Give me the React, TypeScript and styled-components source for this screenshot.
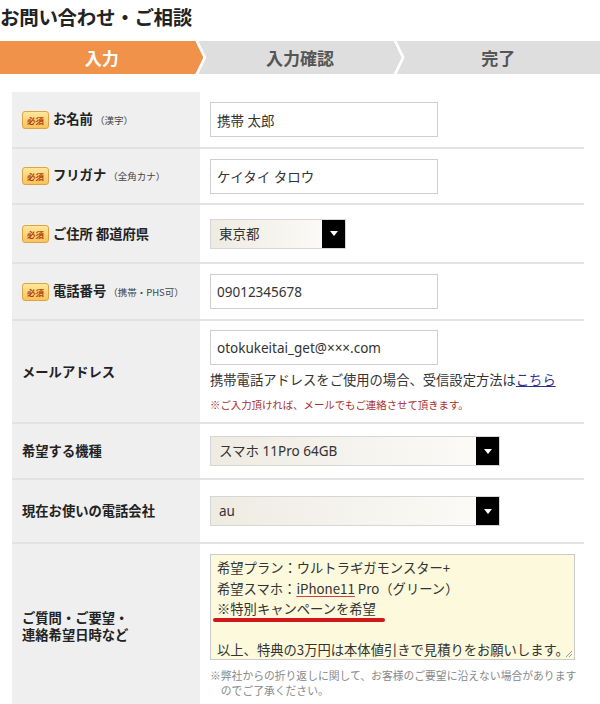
import { createGlobalStyle } from "styled-components";
import styled from "styled-components";

const GlobalStyle = createGlobalStyle`
  html, body {
    margin: 0;
    padding: 0;
    background: #fff;
  }
  body {
    font-family: "Noto Sans CJK JP", "Noto Sans", sans-serif;
    color: #333;
  }
`;

const Page = styled.div`
  width: 600px;
`;

const Title = styled.h1`
  margin: 0;
  padding-top: 4px;
  font-size: 19.5px;
  line-height: 26px;
  font-weight: bold;
  color: #222;
  letter-spacing: -0.3px;
`;

const Steps = styled.div`
  display: flex;
  margin-top: 11px;
  height: 33px;
`;

const Step = styled.div<{ $active?: boolean; $first?: boolean; $last?: boolean }>`
  flex: 1;
  display: flex;
  align-items: center;
  justify-content: center;
  margin-left: ${({ $first }) => ($first ? "0" : "-5px")};
  background: ${({ $active }) => ($active ? "#f1924a" : "#dedede")};
  color: ${({ $active }) => ($active ? "#fff" : "#555")};
  font-size: 17px;
  font-weight: bold;
  clip-path: ${({ $first, $last }) =>
    $first
      ? "polygon(0 0, calc(100% - 8px) 0, 100% 50%, calc(100% - 8px) 100%, 0 100%)"
      : $last
        ? "polygon(0 0, 100% 0, 100% 100%, 0 100%, 8px 50%)"
        : "polygon(0 0, calc(100% - 8px) 0, 100% 50%, calc(100% - 8px) 100%, 0 100%, 8px 50%)"};
`;

const Table = styled.div`
  margin: 18px 0 0 12px;
  width: 572px;
`;

const Row = styled.div`
  display: grid;
  grid-template-columns: 188px 1fr;
  border-bottom: 2px solid #e2e2e2;
  &:last-child {
    border-bottom: none;
  }
`;

const LabelCell = styled.div`
  background: #efefef;
  display: flex;
  align-items: center;
  padding: 0 10px;
`;

const ValueCell = styled.div<{ $py?: number }>`
  padding: ${({ $py = 10 }) => `${$py}px 10px`};
  display: flex;
  flex-direction: column;
  align-items: flex-start;
  justify-content: center;
`;

const Badge = styled.span`
  display: inline-flex;
  align-items: center;
  justify-content: center;
  width: 25px;
  height: 16px;
  margin-right: 4px;
  border: 1px solid #e0a244;
  border-radius: 3px;
  background: linear-gradient(#ffe79a, #f7c45b);
  color: #b3400c;
  font-size: 8.5px;
  font-weight: bold;
  flex-shrink: 0;
`;

const LabelText = styled.span`
  font-size: 13.3px;
  line-height: 17.5px;
  font-weight: bold;
  color: #222;
`;

const LabelNote = styled.span`
  font-size: 9.5px;
  font-weight: normal;
  color: #444;
  margin-left: 2px;
`;

const TextInput = styled.input`
  box-sizing: border-box;
  width: 228px;
  height: 35px;
  margin: 0;
  padding: 0 6px;
  border: 1px solid #cfcfcf;
  background: #fff;
  font-family: "Noto Sans", "Noto Sans CJK JP", sans-serif;
  font-size: 13.5px;
  color: #333;
  outline: none;
`;

const SelectWrap = styled.div<{ $width: number }>`
  display: flex;
  box-sizing: border-box;
  width: ${({ $width }) => $width}px;
  height: 30px;
  border: 1px solid #d6d6d6;
`;

const Select = styled.select`
  flex: 1;
  min-width: 0;
  appearance: none;
  border: none;
  margin: 0;
  padding: 0 8px;
  background: linear-gradient(to right, #eeebe2, #fbfaf7);
  font-family: "Noto Sans", "Noto Sans CJK JP", sans-serif;
  font-size: 13.5px;
  color: #333;
  outline: none;
`;

const ArrowBox = styled.span`
  width: 23px;
  background: #000;
  display: flex;
  align-items: center;
  justify-content: center;
  &::before {
    content: "";
    border-left: 4px solid transparent;
    border-right: 4px solid transparent;
    border-top: 5px solid #fff;
  }
`;

const Hint = styled.div`
  margin-top: 5px;
  font-size: 13.3px;
  line-height: 20px;
  color: #333;
  white-space: nowrap;
  a {
    color: #2f3191;
    text-decoration: underline;
  }
`;

const RedNote = styled.div`
  margin-top: 7px;
  font-size: 10.4px;
  line-height: 16px;
  color: #a83030;
  white-space: nowrap;
`;

const FakeTextarea = styled.div`
  position: relative;
  box-sizing: border-box;
  width: 365px;
  height: 106px;
  padding: 3px 6px;
  border: 1px solid #cbcbcb;
  background: #fcf9dc;
  font-size: 13.3px;
  line-height: 20.5px;
  color: #333;
  white-space: nowrap;
`;

const Line = styled.div``;

const SpellMark = styled.span`
  text-decoration: underline;
  text-decoration-color: #d04040;
  text-underline-offset: 2px;
`;

const Marker = styled.span`
  position: relative;
  &::after {
    content: "";
    position: absolute;
    left: -4px;
    right: -9px;
    bottom: -4px;
    height: 4px;
    border-radius: 2px;
    background: #d3151c;
  }
`;

const Grip = styled.svg`
  position: absolute;
  right: 1px;
  bottom: 1px;
`;

const SmallNote = styled.div`
  margin-top: 8px;
  padding-left: 1em;
  text-indent: -1em;
  font-size: 10.8px;
  line-height: 15px;
  color: #888;
  white-space: nowrap;
`;

function Required() {
  return <Badge>必須</Badge>;
}

export default function App() {
  return (
    <Page>
      <GlobalStyle />
      <Title>お問い合わせ・ご相談</Title>
      <Steps>
        <Step $active $first>入力</Step>
        <Step>入力確認</Step>
        <Step $last>完了</Step>
      </Steps>

      <Table>
        <Row>
          <LabelCell>
            <Required />
            <LabelText>
              お名前<LabelNote>（漢字）</LabelNote>
            </LabelText>
          </LabelCell>
          <ValueCell>
            <TextInput value="携帯 太郎" readOnly />
          </ValueCell>
        </Row>

        <Row>
          <LabelCell>
            <Required />
            <LabelText>
              フリガナ<LabelNote>（全角カナ）</LabelNote>
            </LabelText>
          </LabelCell>
          <ValueCell $py={9.5}>
            <TextInput value="ケイタイ タロウ" readOnly />
          </ValueCell>
        </Row>

        <Row>
          <LabelCell>
            <Required />
            <LabelText>ご住所 都道府県</LabelText>
          </LabelCell>
          <ValueCell $py={13.5}>
            <SelectWrap $width={136}>
              <Select defaultValue="東京都">
                <option>東京都</option>
              </Select>
              <ArrowBox />
            </SelectWrap>
          </ValueCell>
        </Row>

        <Row>
          <LabelCell>
            <Required />
            <LabelText>
              電話番号<LabelNote>（携帯・PHS可）</LabelNote>
            </LabelText>
          </LabelCell>
          <ValueCell $py={10}>
            <TextInput value="09012345678" readOnly />
          </ValueCell>
        </Row>

        <Row>
          <LabelCell>
            <LabelText>メールアドレス</LabelText>
          </LabelCell>
          <ValueCell $py={9}>
            <TextInput value="otokukeitai_get@×××.com" readOnly />
            <Hint>
              携帯電話アドレスをご使用の場合、受信設定方法は<a href="#">こちら</a>
            </Hint>
            <RedNote>※ご入力頂ければ、メールでもご連絡させて頂きます。</RedNote>
          </ValueCell>
        </Row>

        <Row>
          <LabelCell>
            <LabelText>希望する機種</LabelText>
          </LabelCell>
          <ValueCell $py={12}>
            <SelectWrap $width={290}>
              <Select defaultValue="スマホ 11Pro 64GB">
                <option>スマホ 11Pro 64GB</option>
              </Select>
              <ArrowBox />
            </SelectWrap>
          </ValueCell>
        </Row>

        <Row>
          <LabelCell>
            <LabelText>現在お使いの電話会社</LabelText>
          </LabelCell>
          <ValueCell $py={16}>
            <SelectWrap $width={290}>
              <Select defaultValue="au">
                <option>au</option>
              </Select>
              <ArrowBox />
            </SelectWrap>
          </ValueCell>
        </Row>

        <Row>
          <LabelCell>
            <LabelText>
              ご質問・ご要望・
              <br />
              連絡希望日時など
            </LabelText>
          </LabelCell>
          <ValueCell $py={10}>
            <FakeTextarea>
              <Line>希望プラン：ウルトラギガモンスター+</Line>
              <Line>
                希望スマホ：<SpellMark>iPhone11</SpellMark> Pro（グリーン）
              </Line>
              <Line>
                <Marker>※特別キャンペーンを希望</Marker>
              </Line>
              <Line>&nbsp;</Line>
              <Line>以上、特典の3万円は本体値引きで見積りをお願いします。</Line>
              <Grip width="9" height="9" viewBox="0 0 9 9">
                <line x1="8" y1="2" x2="2" y2="8" stroke="#999" strokeWidth="1" />
                <line x1="8" y1="5" x2="5" y2="8" stroke="#999" strokeWidth="1" />
              </Grip>
            </FakeTextarea>
            <SmallNote>
              ※弊社からの折り返しに関して、お客様のご要望に沿えない場合があります
              <br />
              のでご了承ください。
            </SmallNote>
          </ValueCell>
        </Row>
      </Table>
    </Page>
  );
}
